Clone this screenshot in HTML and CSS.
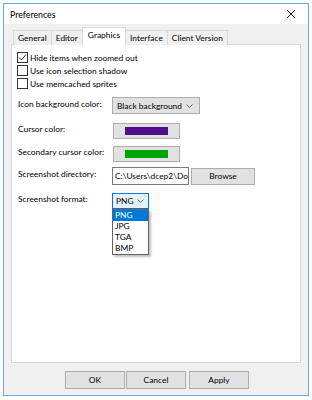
FILE: index.html
```html
<!DOCTYPE html>
<html>
<head>
<meta charset="utf-8">
<link rel="stylesheet" href="styles.css">
</head>
<body>
<div class="window">
  <div class="titlebar">
    <span class="title">Preferences</span>
    <svg class="close" width="10" height="10" viewBox="0 0 10 10"><path d="M1 1L9 9M9 1L1 9" stroke="#111" stroke-width="1"/></svg>
  </div>
  <div class="body">
    <div class="tabs">
      <div class="tab">General</div>
      <div class="tab">Editor</div>
      <div class="tab active">Graphics</div>
      <div class="tab">Interface</div>
      <div class="tab">Client Version</div>
    </div>
    <div class="panel">
      <div class="check-row"><span class="cb checked"><svg width="9" height="9" viewBox="0 0 9 9"><path d="M1 4.5L3.5 7L8 1.5" fill="none" stroke="#222" stroke-width="1"/></svg></span>Hide items when zoomed out</div>
      <div class="check-row"><span class="cb"></span>Use icon selection shadow</div>
      <div class="check-row"><span class="cb"></span>Use memcached sprites</div>

      <div class="row r-select"><span class="label">Icon background color:</span>
        <div class="combo wide"><span>Black background</span><svg class="chev" width="7" height="4" viewBox="0 0 7 4"><path d="M0.5 0.5L3.5 3.5L6.5 0.5" fill="none" stroke="#555" stroke-width="0.9"/></svg></div>
      </div>
      <div class="row r-cursor"><span class="label">Cursor color:</span>
        <div class="colorbtn"><span class="swatch purple"></span></div>
      </div>
      <div class="row r-second"><span class="label">Secondary cursor color:</span>
        <div class="colorbtn"><span class="swatch green"></span></div>
      </div>
      <div class="row r-dir"><span class="label">Screenshot directory:</span>
        <div class="input"><span class="input-text">C:\Users\dcep2\Do</span></div>
        <div class="btn browse">Browse</div>
      </div>
      <div class="row r-format"><span class="label">Screenshot format:</span>
        <div class="combo-wrap">
          <div class="combo focus"><span>PNG</span><svg class="chev" width="7" height="4" viewBox="0 0 7 4"><path d="M0.5 0.5L3.5 3.5L6.5 0.5" fill="none" stroke="#555" stroke-width="0.9"/></svg></div>
          <div class="droplist">
            <div class="opt sel">PNG</div>
            <div class="opt">JPG</div>
            <div class="opt">TGA</div>
            <div class="opt">BMP</div>
          </div>
        </div>
      </div>
    </div>
    <div class="buttons">
      <div class="btn">OK</div>
      <div class="btn">Cancel</div>
      <div class="btn apply">Apply</div>
    </div>
  </div>
</div>
</body>
</html>
```

FILE: styles.css
```css
html, body {
  margin: 0;
  padding: 0;
  background: #ffffff;
}
body {
  font-family: Lato, "Noto Sans", sans-serif;
  font-size: 8.4px;
  color: #000;
  white-space: nowrap;
}
.window {
  margin: 3px 0 0 3px;
  width: 306px;
  height: 393px;
  border: 1px solid #67a6e8;
  background: #f0f0f0;
  display: flex;
  flex-direction: column;
  box-sizing: border-box;
}
.titlebar {
  height: 20px;
  background: #fff;
  display: flex;
  align-items: center;
  justify-content: space-between;
  padding: 0 12px 0 6px;
  flex: none;
}
.title {
  font-size: 8.8px;
}
.close {
  display: block;
}
.body {
  flex: 1;
  display: flex;
  flex-direction: column;
  padding: 3px 7px 0 7px;
}
.tabs {
  display: flex;
  align-items: flex-end;
  height: 18px;
  padding-left: 2px;
  position: relative;
  z-index: 2;
  margin-bottom: -1px;
}
.tab {
  height: 15px;
  box-sizing: border-box;
  border: 1px solid #d9d9d9;
  border-bottom: none;
  border-left: none;
  background: #f0f0f0;
  padding: 0 4px;
  display: flex;
  align-items: center;
  line-height: 1;
}
.tab:first-child {
  border-left: 1px solid #d9d9d9;
}
.tab.active {
  background: #fff;
  border-left: 1px solid #d9d9d9;
  margin-left: -1px;
  padding: 0 5px 3px 5px;
  height: 19px;
  margin-bottom: -1px;
}
.panel {
  height: 319px;
  box-sizing: border-box;
  background: #fff;
  border: 1px solid #d9d9d9;
  padding: 6px 0 0 5px;
  display: flex;
  flex-direction: column;
  position: relative;
  z-index: 1;
}
.check-row {
  height: 13px;
  display: flex;
  align-items: center;
}
.cb {
  width: 11px;
  height: 11px;
  box-sizing: border-box;
  border: 1px solid #333;
  background: #fff;
  margin-right: 2px;
  display: flex;
  align-items: center;
  justify-content: center;
}
.cb svg { display: block; }
.row {
  display: flex;
  align-items: center;
  padding-left: 1px;
}
.label {
  width: 94px;
  flex: none;
  position: relative;
  top: -2px;
}
.r-select { margin-top: 7px; height: 17px; }
.r-cursor { margin-top: 9px; height: 16px; }
.r-second { margin-top: 7px; height: 16px; }
.r-dir { margin-top: 5px; height: 18px; }
.r-format { margin-top: 8px; height: 16px; }
.combo {
  box-sizing: border-box;
  height: 17px;
  border: 1px solid #adadad;
  background: #e1e1e1;
  display: flex;
  align-items: center;
  justify-content: space-between;
  padding: 0 6px 0 4px;
}
.combo.wide { width: 88px; }
.chev { display: block; }
.colorbtn {
  width: 67px;
  height: 16px;
  box-sizing: border-box;
  border: 1px solid #adadad;
  background: #e1e1e1;
  display: flex;
  align-items: center;
  justify-content: center;
  margin-left: 1px;
}
.swatch {
  width: 43px;
  height: 8px;
}
.purple { background: #4f0f8a; }
.green { background: #00a400; }
.input {
  width: 77px;
  height: 18px;
  box-sizing: border-box;
  border: 1px solid #7a7a7a;
  background: #fff;
  padding: 0 2px;
  overflow: hidden;
  line-height: 16px;
}
.input-text {
  display: block;
}
.btn {
  box-sizing: border-box;
  border: 1px solid #adadad;
  background: #e1e1e1;
  display: flex;
  align-items: center;
  justify-content: center;
  height: 18px;
  width: 60px;
}
.browse {
  width: 64px;
  height: 17px;
  margin-left: 2px;
}
.combo-wrap {
  position: relative;
}
.combo.focus {
  width: 37px;
  height: 16px;
  background: #e5f1fb;
  border-color: #0078d7;
  padding: 0 4px 0 3px;
}
.droplist {
  position: absolute;
  left: 0;
  top: 16px;
  width: 37px;
  box-sizing: border-box;
  border: 1px solid #646464;
  background: #fff;
  box-shadow: 2px 2px 2px rgba(0,0,0,0.25);
}
.opt {
  height: 11px;
  line-height: 11px;
  padding-left: 2px;
}
.opt.sel {
  background: #0078d7;
  color: #fff;
}
.buttons {
  display: flex;
  padding: 8px 0 0 54px;
  gap: 1px;
}
.buttons .apply { margin-left: 2px; }
```
